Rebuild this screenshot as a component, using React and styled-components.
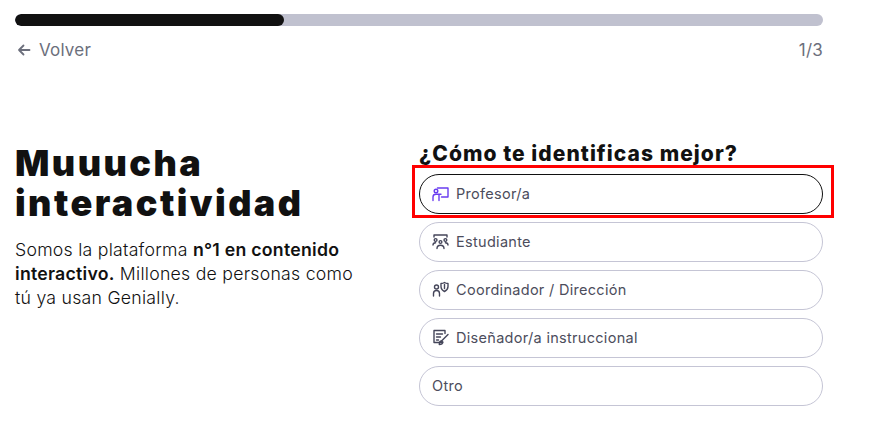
import React from 'react';
import styled, { createGlobalStyle } from 'styled-components';

const Global = createGlobalStyle`
  html, body { margin: 0; padding: 0; background: #fff; }
  body { font-family: "Inter", "Liberation Sans", sans-serif; color: #111; }
`;

const Page = styled.div`
  width: 808px;
  margin-left: 15px;
  padding-top: 14px;
`;
const Track = styled.div`
  height: 12px;
  border-radius: 6px;
  background: #c0c1cf;
  overflow: hidden;
`;
const Fill = styled.div`
  height: 100%;
  border-radius: 6px;
  background: #111;
`;
const TopRow = styled.div`
  display: flex;
  justify-content: space-between;
  align-items: center;
  margin-top: 14px;
  height: 20px;
  color: #6c6f7c;
  font-size: 17px;
  letter-spacing: 0.2px;
`;
const Back = styled.div`
  display: flex;
  align-items: center;
  gap: 8px;
  margin-left: 2px;
`;
const Columns = styled.div`
  display: grid;
  grid-template-columns: 1fr 404px;
  margin-top: 82px;
`;
const Intro = styled.div`
  padding-top: 1px;
`;
const Title = styled.h1`
  margin: 0;
  font-family: "Inter", sans-serif;
  font-weight: 900;
  font-size: 36px;
  line-height: 40px;
  letter-spacing: 2.45px;
  color: #111;
`;
const Lead = styled.p`
  margin: 15px 0 0;
  font-size: 17.7px;
  line-height: 24px;
  letter-spacing: 0.25px;
  font-weight: 300;
  color: #111;
  b { font-weight: 600; }
`;
const Question = styled.h2`
  margin: 0;
  font-family: "Inter", sans-serif;
  font-weight: 800;
  font-size: 21px;
  line-height: 24px;
  letter-spacing: 1.05px;
  color: #111;
  white-space: nowrap;
`;
const Options = styled.div`
  display: flex;
  flex-direction: column;
  gap: 8px;
  margin-top: 8px;
`;
const Option = styled.div`
  position: relative;
  box-sizing: border-box;
  height: 40px;
  display: flex;
  align-items: center;
  gap: 7px;
  padding: 0 12px 1px;
  border-radius: 20px;
  border: 1px solid ${p => (p.$active ? '#111' : '#c5c5d5')};
  color: #4c4d5c;
  font-size: 14.5px;
  letter-spacing: 0.3px;
`;
const Highlight = styled.div`
  position: absolute;
  left: -8px;
  right: -12px;
  top: -10px;
  bottom: -5px;
  border: 3px solid #ff0000;
  pointer-events: none;
`;
const Icon = styled.svg`
  width: 17px;
  height: 17px;
  flex: none;
  fill: none;
  stroke: ${p => p.$color || '#45465a'};
  stroke-width: 1.4;
  stroke-linecap: round;
  stroke-linejoin: round;
`;

const ArrowLeft = () => (
  <svg width="14" height="14" viewBox="0 0 14 14" fill="none" stroke="#6c6f7c" strokeWidth="1.8" strokeLinecap="round" strokeLinejoin="round">
    <path d="M12.5 7H2M6.5 2.5 2 7l4.5 4.5" />
  </svg>
);
const Teacher = () => (
  <Icon viewBox="0 0 17 17" $color="#6a3df0">
    <path d="M5.500 3H16v9H9.500" />
    <circle cx="4" cy="6" r="1.800" />
    <path d="M1 15.500v-3.500c0-1.600 1.300-2.700 3-2.700h5" />
    <path d="M7 10v5.500" />
  </Icon>
);
const Students = () => (
  <Icon viewBox="0 0 17 17">
    <path d="M2 4V2h13v2" />
    <circle cx="3.600" cy="7" r="1.400" />
    <circle cx="13.400" cy="7" r="1.400" />
    <circle cx="8.500" cy="9" r="1.400" />
    <path d="M1 12c0-1.500 1-2.300 2.600-2.300M16 12c0-1.500-1-2.300-2.600-2.300M5 15.500c0-2 1.400-3.300 3.500-3.300s3.500 1.300 3.500 3.300" />
  </Icon>
);
const Coordinator = () => (
  <Icon viewBox="0 0 17 17">
    <circle cx="4.500" cy="6" r="2" />
    <path d="M1.500 15v-2.500c0-1.700 1.300-3 3-3s3 1.300 3 3V15" />
    <path d="M9 2.500c1.500 0 2.800-.5 3.500-1 .7.5 2 1 3.500 1v3c0 2.500-1.500 4-3.500 5-2-1-3.500-2.500-3.500-5zM12.500 3.500v4" />
  </Icon>
);
const Designer = () => (
  <Icon viewBox="0 0 17 17">
    <path d="M10.500 13.500H2V1.500h11v3" />
    <path d="M4.500 5h6M4.500 8h4M4.500 11h2" />
    <path d="M16 5.500 9.500 12" />
    <path d="M9.500 12c-1.500 0-2.200 1-2.200 3.500 2.200 0 3.600-1 3.600-2.500z" />
  </Icon>
);

export default function App() {
  return (
    <Page>
      <Global />
      <Track><Fill style={{ width: `${(269 / 808) * 100}%` }} /></Track>
      <TopRow>
        <Back><ArrowLeft />Volver</Back>
        <span>1/3</span>
      </TopRow>
      <Columns>
        <Intro>
          <Title>Muuucha<br />interactividad</Title>
          <Lead>
            Somos la plataforma <b>n°1 en contenido<br />interactivo.</b> Millones de personas como<br />tú ya usan Genially.
          </Lead>
        </Intro>
        <div>
          <Question>¿Cómo te identificas mejor?</Question>
          <Options>
            <Option $active><Teacher />Profesor/a<Highlight /></Option>
            <Option><Students />Estudiante</Option>
            <Option><Coordinator />Coordinador / Dirección</Option>
            <Option><Designer />Diseñador/a instruccional</Option>
            <Option>Otro</Option>
          </Options>
        </div>
      </Columns>
    </Page>
  );
}
